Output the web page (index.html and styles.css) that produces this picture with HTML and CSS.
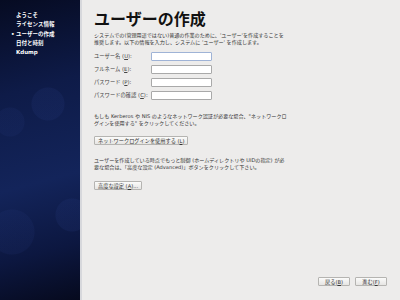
FILE: index.html
```html
<!DOCTYPE html>
<html lang="ja">

<head>
    <meta charset="UTF-8">
    <title>ユーザーの作成</title>
    <link rel="stylesheet" href="styles.css">
</head>

<body>
    <div class="side">
        <ul class="steps">
            <li>ようこそ</li>
            <li>ライセンス情報</li>
            <li class="current">ユーザーの作成</li>
            <li>日付と時刻</li>
            <li>Kdump</li>
        </ul>
    </div>

    <div class="main">
        <h1>ユーザーの作成</h1>
        <p class="text">システムでの(管理用途ではない)普通の作業のために、'ユーザー'を作成することを推奨します。以下の情報を入力し、システムに 'ユーザー' を作成します。</p>

        <div class="form">
            <label>ユーザー名 (<u>U</u>):</label>
            <input type="text" class="field focus">
            <label>フルネーム (<u>E</u>):</label>
            <input type="text" class="field">
            <label>パスワード (<u>P</u>):</label>
            <input type="password" class="field">
            <label>パスワードの確認 (<u>C</u>):</label>
            <input type="password" class="field">
        </div>

        <p class="text net">もしも Kerberos や NIS のようなネットワーク認証が必要な場合、"ネットワークログインを使用する" をクリックしてください。</p>
        <button class="btn">ネットワークログインを使用する (<u>L</u>)</button>

        <p class="text adv">ユーザーを作成している時点でもっと制御 (ホームディレクトリや UIDの指定) が必要な場合は、「高度な設定 (Advanced)」ボタンをクリックして下さい。</p>
        <button class="btn">高度な設定 (<u>A</u>)...</button>

        <div class="nav">
            <button class="btn wide">戻る(<u>B</u>)</button>
            <button class="btn wide">進む(<u>F</u>)</button>
        </div>
    </div>
</body>

</html>
```

FILE: styles.css
```css
*,
::before,
::after {
    box-sizing: border-box;
    margin: 0;
    padding: 0;
}

body {
    display: flex;
    width: 400px;
    height: 300px;
    overflow: hidden;
    background: #edeceb;
    font-family: "DejaVu Sans", "Noto Sans CJK JP", sans-serif;
    color: #2e3436;
}

/* left step list */
.side {
    width: 82px;
    height: 300px;
    flex: none;
    border-right: 2px solid #d7d8dc;
    background:
        radial-gradient(circle at 48px 104px, rgba(40, 60, 130, 0.18) 0 16px, transparent 17px),
        radial-gradient(circle at 10px 122px, rgba(40, 60, 130, 0.14) 0 14px, transparent 15px),
        radial-gradient(circle at 72px 215px, rgba(40, 60, 130, 0.18) 0 16px, transparent 17px),
        radial-gradient(circle at 12px 232px, rgba(40, 60, 130, 0.14) 0 22px, transparent 23px),
        linear-gradient(165deg, #060b22 0%, #0e1b48 30%, #13245a 60%, #0c1740 82%, #060a1e 100%);
}

.steps {
    list-style: none;
    padding: 11px 0 0 16px;
    font-size: 5.5px;
    font-weight: bold;
    line-height: 9.3px;
    color: #ffffff;
}

.steps .current {
    position: relative;
}

.steps .current::before {
    content: "•";
    position: absolute;
    left: -5px;
}

/* content */
.main {
    flex: 1;
    display: flex;
    flex-direction: column;
    align-items: flex-start;
    padding: 8px 13px 14px 12px;
}

h1 {
    font-size: 16px;
    font-weight: bold;
    color: #111;
    line-height: 24px;
}

.text {
    width: 192px;
    font-size: 5.1px;
    line-height: 7.3px;
    color: #333;
}

.form {
    display: grid;
    grid-template-columns: 57px 61px;
    row-gap: 4px;
    align-items: center;
    margin-top: 5px;
    font-size: 5.3px;
    color: #444;
}

.field {
    width: 61px;
    height: 9px;
    border: 1px solid #a9a9a9;
    border-radius: 1px;
    background: #fff;
}

.field.focus {
    border-color: #9fb3d6;
}

.net {
    width: 196px;
    margin-top: 13px;
}

.adv {
    margin-top: 12px;
}

.btn {
    margin-top: 9px;
    height: 9px;
    padding: 0 3px;
    font-family: inherit;
    font-size: 5.2px;
    color: #333;
    background: linear-gradient(#fbfbfa, #e6e5e3);
    border: 1px solid #b5b4b1;
    border-radius: 1px;
}

.nav {
    margin-top: auto;
    align-self: flex-end;
    display: flex;
    gap: 5px;
}

.nav .btn {
    margin-top: 0;
    width: 32px;
}
```
